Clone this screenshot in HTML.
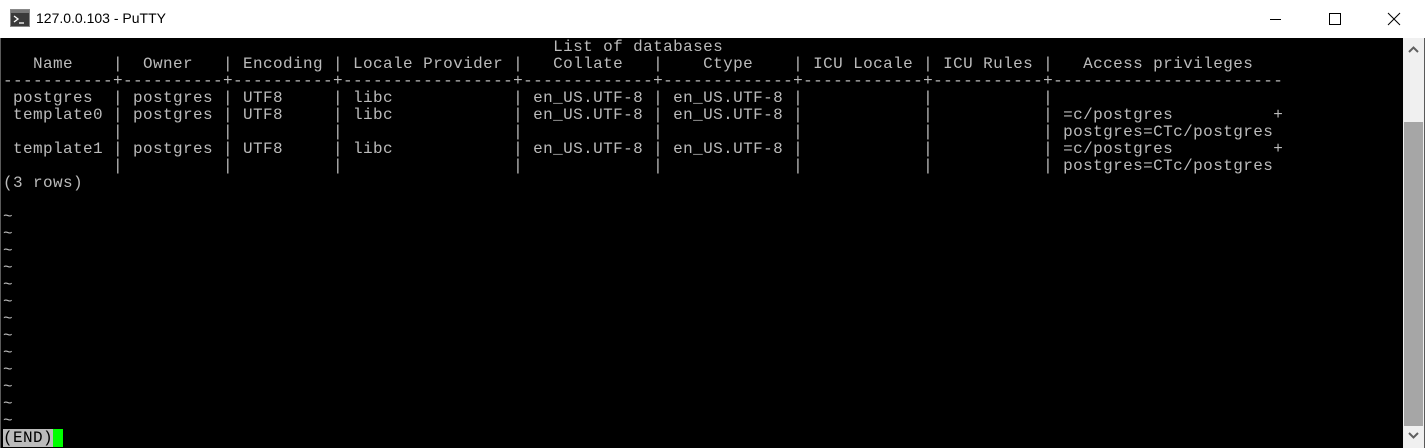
<!DOCTYPE html>
<html><head><meta charset="utf-8"><style>
html,body{margin:0;padding:0;background:#fff;}
body{width:1425px;height:448px;position:relative;overflow:hidden;font-family:"Segoe UI","Liberation Sans",sans-serif;}
.win{position:absolute;left:0;top:0;width:1423px;height:446px;border:1px solid #5a5a5a;}
.title{position:absolute;left:0;top:0;width:1425px;height:38px;background:#fff;}
.title .t{position:absolute;left:36px;top:10px;font-size:14px;color:#000;}
.term{position:absolute;left:1px;top:38px;width:1402px;height:410px;background:#000;}
pre{position:absolute;left:2px;top:1px;margin:0;font-family:"Liberation Mono",monospace;font-size:16px;letter-spacing:0.4px;line-height:17px;color:#bbb;}
.sb{position:absolute;left:1403px;top:38px;width:21px;height:410px;background:#f0f0f0;}
.thumb{position:absolute;left:1px;top:84px;width:19px;height:304px;background:#a6a6a6;}
.end{background:#bbb;color:#000;}
.cur{background:#00ff00;}
</style></head><body>
<div class="win"></div>
<div class="title">
<svg style="position:absolute;left:10px;top:9px" width="20" height="18"><rect x="0.5" y="0.5" width="19" height="17" fill="#3a3a3a" stroke="#888"/><rect x="1" y="1" width="18" height="3" fill="#777"/><path d="M4 7 L8 10 L4 13" stroke="#fff" fill="none" stroke-width="1.3"/><path d="M9 14 H14" stroke="#fff" stroke-width="1.3"/></svg>
<div class="t">127.0.0.103 - PuTTY</div>
<svg style="position:absolute;left:1270px;top:12px" width="150" height="16"><path d="M0 7.5 H11" stroke="#000"/><rect x="59.5" y="1.5" width="11" height="11" fill="none" stroke="#000"/><path d="M118 1 L130 13 M130 1 L118 13" stroke="#000"/></svg>
</div>
<div class="term"><pre>                                                       List of databases
   Name    |  Owner   | Encoding | Locale Provider |   Collate   |    Ctype    | ICU Locale | ICU Rules |   Access privileges
-----------+----------+----------+-----------------+-------------+-------------+------------+-----------+-----------------------
 postgres  | postgres | UTF8     | libc            | en_US.UTF-8 | en_US.UTF-8 |            |           |
 template0 | postgres | UTF8     | libc            | en_US.UTF-8 | en_US.UTF-8 |            |           | =c/postgres          +
           |          |          |                 |             |             |            |           | postgres=CTc/postgres
 template1 | postgres | UTF8     | libc            | en_US.UTF-8 | en_US.UTF-8 |            |           | =c/postgres          +
           |          |          |                 |             |             |            |           | postgres=CTc/postgres
(3 rows)

~
~
~
~
~
~
~
~
~
~
~
~
~
<span class="end">(END)</span><span class="cur"> </span></pre></div>
<div class="sb"><div class="thumb"></div>
<svg style="position:absolute;left:5px;top:8px" width="11" height="8"><path d="M1 6 L5.5 1.5 L10 6" stroke="#606060" stroke-width="2" fill="none"/></svg>
<svg style="position:absolute;left:5px;top:393px" width="11" height="8"><path d="M1 2 L5.5 6.5 L10 2" stroke="#606060" stroke-width="2" fill="none"/></svg>
</div>
</body></html>
